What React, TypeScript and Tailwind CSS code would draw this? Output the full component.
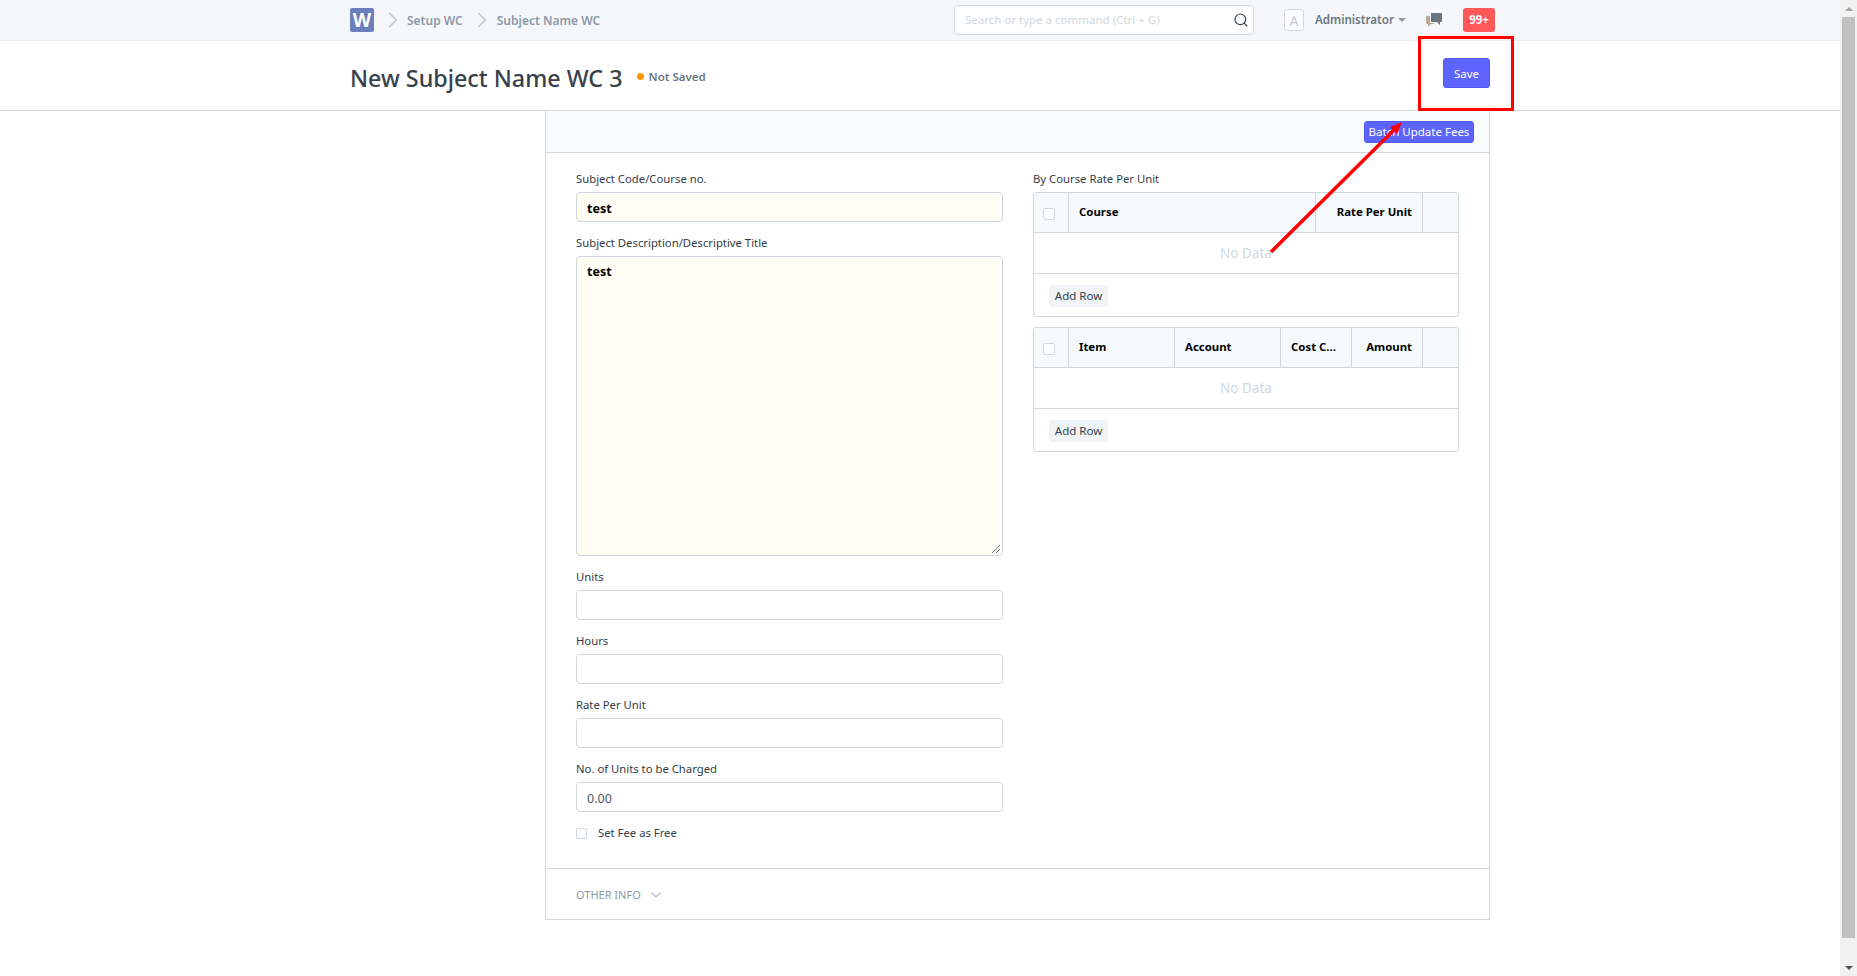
import { Search, ChevronRight, ChevronDown } from "lucide-react";

const font = "font-['Noto_Sans',sans-serif]";

function Field({ label, value, highlight }: { label: string; value?: string; highlight?: boolean }) {
  return (
    <div className="flex flex-col">
      <label className="flex h-[30px] items-center pt-[4px] text-[11.3px] text-[#333c44]">{label}</label>
      <div
        className={`flex h-[30px] items-center rounded-[4px] border border-[#d1d8dd] px-[10px] pt-[4px] text-[12.5px] ${
          highlight ? "bg-[#fffdf4] font-bold text-black" : "bg-white text-[#4c5a67]"
        }`}
      >
        {value}
      </div>
    </div>
  );
}

function GridTable({ columns }: { columns: { name: string; width: string; right?: boolean }[] }) {
  return (
    <div className="rounded-[3px] border border-[#d1d8dd]">
      <div className="flex h-[40px] border-b border-[#d1d8dd] bg-[#f7fafc]">
        <div className="flex w-[35px] shrink-0 items-center justify-center border-r border-[#d1d8dd] pr-[4px] pt-[3px]">
          <span className="h-[12px] w-[12px] rounded-[2px] border border-[#d1d8dd] bg-white" />
        </div>
        {columns.map((c) => (
          <div
            key={c.name}
            className={`flex shrink-0 items-center border-r border-[#d1d8dd] px-[10px] pb-[2px] text-[11.4px] font-bold text-black ${c.width} ${
              c.right ? "justify-end" : ""
            }`}
          >
            {c.name}
          </div>
        ))}
      </div>
      <div className="flex h-[41px] items-center justify-center border-b border-[#d1d8dd] text-[13.5px] text-[#d1d8dd]">
        No Data
      </div>
      <div className="flex h-[42px] items-center px-[15px] pt-[2px]">
        <button className="flex h-[22px] w-[59px] items-center justify-center rounded-[3px] bg-[#f0f4f7] text-[11.5px] text-[#36414c]">
          Add Row
        </button>
      </div>
    </div>
  );
}

export default function App() {
  return (
    <div className={`relative flex h-screen w-full overflow-hidden bg-white ${font}`}>
      <div className="min-w-0 flex-1">
        <header className="h-[41px] border-b border-[#eaeef2] bg-[#f5f7fa]">
          <div className="mx-auto flex h-full w-[1140px] items-center">
            <div className="flex h-[24px] w-[24px] items-center justify-center rounded-[2px] bg-[#6b7fbb] text-[19px] font-bold text-white">
              W
            </div>
            <ChevronRight className="ml-[6px] h-[26px] w-[26px] text-[#c0c9d2]" strokeWidth={1.6} />
            <span className="ml-[1px] pt-[1px] text-[12px] font-semibold text-[#8d99a6]">Setup WC</span>
            <ChevronRight className="ml-[6px] h-[26px] w-[26px] text-[#c0c9d2]" strokeWidth={1.6} />
            <span className="ml-[2px] pt-[1px] text-[12px] font-semibold text-[#8d99a6]">Subject Name WC</span>
            <div className="-mr-[5px] ml-auto flex items-center">
              <div className="flex h-[30px] w-[300px] items-center justify-between rounded-[4px] border border-[#d1d8dd] bg-white pl-[10px] pr-[4px] text-[11.5px] text-[#d1d8dd]">
                <span>Search or type a command (Ctrl + G)</span>
                <Search className="h-[16px] w-[16px] text-[#36414c]" strokeWidth={1.75} />
              </div>
              <div className="ml-[30px] flex h-[22px] w-[20px] items-center justify-center rounded-[3px] border border-[#d1d8dd] bg-white text-[14px] text-[#c4ccd4]">
                A
              </div>
              <span className="ml-[11px] text-[11.6px] font-semibold text-[#6c7680]">Administrator</span>
              <span className="ml-[4px] h-0 w-0 border-x-[4px] border-t-[4px] border-x-transparent border-t-[#8d99a6]" />
              <svg className="ml-[20px]" width="16" height="14" viewBox="0 0 16 14">
                <path d="M5 0h10a1 1 0 0 1 1 1v7a1 1 0 0 1-1 1h-1v3l-3-3H5z" fill="#6c7680" />
                <path d="M0 4a1 1 0 0 1 1-1h3v6a1 1 0 0 0 1 1h3v1H5l-3 3v-3H1a1 1 0 0 1-1-1z" fill="#b8ad94" />
              </svg>
              <div className="ml-[21px] flex h-[24px] w-[32px] items-center justify-center rounded-[3px] bg-[#ff5858] text-[11.5px] font-bold text-white">
                99+
              </div>
            </div>
          </div>
        </header>

        <div className="h-[70px] border-b border-[#d1d8dd]">
          <div className="mx-auto flex h-full w-[1140px] items-center justify-between">
            <div className="flex items-center pt-[7px]">
              <h1 className="text-[23.3px] font-medium leading-none text-[#36414c]">New Subject Name WC 3</h1>
              <span className="mb-[4px] ml-[14px] h-[7px] w-[7px] rounded-full bg-[#ff9800]" />
              <span className="mb-[4px] ml-[5px] text-[11.5px] font-semibold text-[#6c7680]">Not Saved</span>
            </div>
            <button className="mb-[5px] flex h-[30px] w-[47px] items-center justify-center rounded-[3px] border border-[#4f5af0] bg-[#5e64ff] pt-[1px] text-[11.5px] text-white">
              Save
            </button>
          </div>
        </div>

        <div className="mx-auto flex w-[1140px] justify-end">
          <div className="h-[809px] w-[945px] border-x border-b border-[#d1d8dd]">
            <div className="flex h-[42px] items-center justify-end border-b border-[#d1d8dd] bg-[#fafbfc] pr-[15px]">
              <button className="flex h-[22px] w-[110px] items-center justify-center rounded-[3px] border border-[#4f5af0] bg-[#5e64ff] text-[11.5px] text-white">
                Batch Update Fees
              </button>
            </div>
            <div className="flex h-[716px] gap-[30px] border-b border-[#d1d8dd] px-[30px] pt-[9px]">
              <div className="w-[427px] shrink-0">
                <Field label="Subject Code/Course no." value="test" highlight />
                <div className="flex flex-col">
                  <label className="flex h-[34px] items-center pt-[8px] text-[11.3px] text-[#333c44]">
                    Subject Description/Descriptive Title
                  </label>
                  <div className="relative h-[300px] rounded-[4px] border border-[#d1d8dd] bg-[#fffdf4] px-[10px] pt-[6px] text-[12.5px] font-bold text-black">
                    test
                    <svg className="absolute bottom-[1px] right-[1px]" width="10" height="10" viewBox="0 0 10 10">
                      <path d="M9 1 1 9M9 5 5 9" stroke="#777" strokeWidth="1" />
                    </svg>
                  </div>
                </div>
                <div className="mt-[4px] flex flex-col gap-[4px]">
                  <Field label="Units" />
                  <Field label="Hours" />
                  <Field label="Rate Per Unit" />
                  <Field label="No. of Units to be Charged" value="0.00" />
                </div>
                <div className="mt-[13px] flex items-center">
                  <span className="h-[11px] w-[11px] rounded-[2px] border border-[#d1d8dd] bg-white" />
                  <span className="ml-[11px] text-[11.3px] text-[#36414c]">Set Fee as Free</span>
                </div>
              </div>
              <div className="w-[426px] shrink-0">
                <label className="flex h-[30px] items-center pt-[4px] text-[11.3px] text-[#333c44]">
                  By Course Rate Per Unit
                </label>
                <GridTable
                  columns={[
                    { name: "Course", width: "w-[247px]" },
                    { name: "Rate Per Unit", width: "w-[107px]", right: true },
                  ]}
                />
                <div className="mt-[10px]">
                  <GridTable
                    columns={[
                      { name: "Item", width: "w-[106px]" },
                      { name: "Account", width: "w-[106px]" },
                      { name: "Cost C...", width: "w-[71px]" },
                      { name: "Amount", width: "w-[71px]", right: true },
                    ]}
                  />
                </div>
              </div>
            </div>
            <div className="flex h-[49px] items-center px-[30px] pt-[3px] text-[11px] text-[#8d99a6]">
              OTHER INFO
              <ChevronDown className="ml-[7px] h-[16px] w-[16px] text-[#c0c9d2]" strokeWidth={2.5} />
            </div>
          </div>
        </div>
      </div>

      <div className="flex h-full w-[17px] shrink-0 flex-col items-center bg-[#f1f1f1]">
        <div className="flex h-[17px] items-center justify-center">
          <span className="h-0 w-0 border-x-[4px] border-b-[4px] border-x-transparent border-b-[#a3a3a3]" />
        </div>
        <div className="h-[921px] w-[13px] bg-[#c1c1c1]" />
        <div className="flex flex-1 items-end justify-center pb-[6px]">
          <span className="h-0 w-0 border-x-[4px] border-t-[4px] border-x-transparent border-t-[#505050]" />
        </div>
      </div>

      {/* annotation drawn on top of the screenshot */}
      <div className="absolute left-[1418px] top-[36px] h-[75px] w-[96px] border-[3px] border-[#ff0000]" />
      <svg className="absolute left-0 top-0" width="1857" height="976">
        <path d="M1271 252 1396 128" stroke="#ff0000" strokeWidth="3.5" />
        <path d="M1402 122 1390 127 1397 134z" fill="#ff0000" />
      </svg>
    </div>
  );
}
